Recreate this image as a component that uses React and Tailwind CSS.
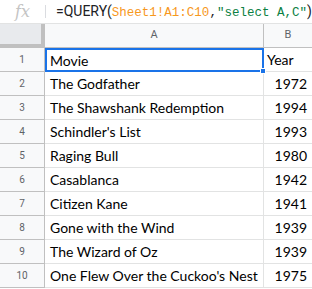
const rows = [
  ["Movie", "Year"],
  ["The Godfather", "1972"],
  ["The Shawshank Redemption", "1994"],
  ["Schindler's List", "1993"],
  ["Raging Bull", "1980"],
  ["Casablanca", "1942"],
  ["Citizen Kane", "1941"],
  ["Gone with the Wind", "1939"],
  ["The Wizard of Oz", "1939"],
  ["One Flew Over the Cuckoo's Nest", "1975"],
];

const cellFont = "text-[14px] text-black font-['Lato',sans-serif] whitespace-nowrap";

export default function App() {
  return (
    <div className="w-[312px] h-[289px] overflow-hidden bg-white font-['Roboto',sans-serif]">
      <div className="flex h-[24px] items-center border-b border-[#e2e3e3]">
        <div className="w-[45px] flex items-center justify-center">
          <span className="font-['DejaVu_Serif',serif] italic text-[#c4c4c4] text-[16px] leading-none">fx</span>
        </div>
        <div className="h-[13px] w-px bg-[#dadce0]" />
        <div className="pl-[10px] text-[14px] text-[#202124] whitespace-nowrap">
          =QUERY(
          <span className="font-['Liberation_Mono',monospace] text-[12.5px] text-[#f7981d]">Sheet1!A1:C10</span>
          <span className="font-['Liberation_Mono',monospace] text-[12.5px]">,</span>
          <span className="font-['Liberation_Mono',monospace] text-[12.5px] text-[#0b8043]">"select A,C"</span>
          )
        </div>
      </div>
      <div className="flex h-[24px] bg-[#f8f9fa] text-[11px] text-[#5f6368]">
        <div className="w-[45px] bg-[#e8eaed] border-r-[4px] border-b-[4px] border-[#c0c0c0]" />
        <div className="w-[219px] flex items-center justify-center border-r border-b border-[#c0c0c0]">A</div>
        <div className="flex-1 flex items-center justify-center border-b border-[#c0c0c0]">B</div>
      </div>
      {rows.map((r, i) => (
        <div key={i} className="flex h-[24px]">
          <div className="w-[45px] flex items-center justify-center bg-[#f8f9fa] border-r border-b border-[#c0c0c0] text-[10px] text-[#5f6368]">
            {i + 1}
          </div>
          <div
            className={
              i === 0
                ? "relative w-[219px] flex items-center pl-[3px] border-2 border-[#1a73e8] " + cellFont
                : "w-[219px] flex items-center pl-[5px] border-r border-b border-[#e2e3e3] " + cellFont
            }
          >
            {r[0]}
            {i === 0 && <div className="absolute right-[-4px] bottom-[-4px] w-[6px] h-[6px] bg-[#1a73e8] border border-white" />}
          </div>
          <div
            className={
              "flex-1 flex items-center border-b border-[#e2e3e3] " +
              cellFont +
              (i === 0 ? " justify-start pl-[3px]" : " justify-end pr-[5px]")
            }
          >
            {r[1]}
          </div>
        </div>
      ))}
    </div>
  );
}
